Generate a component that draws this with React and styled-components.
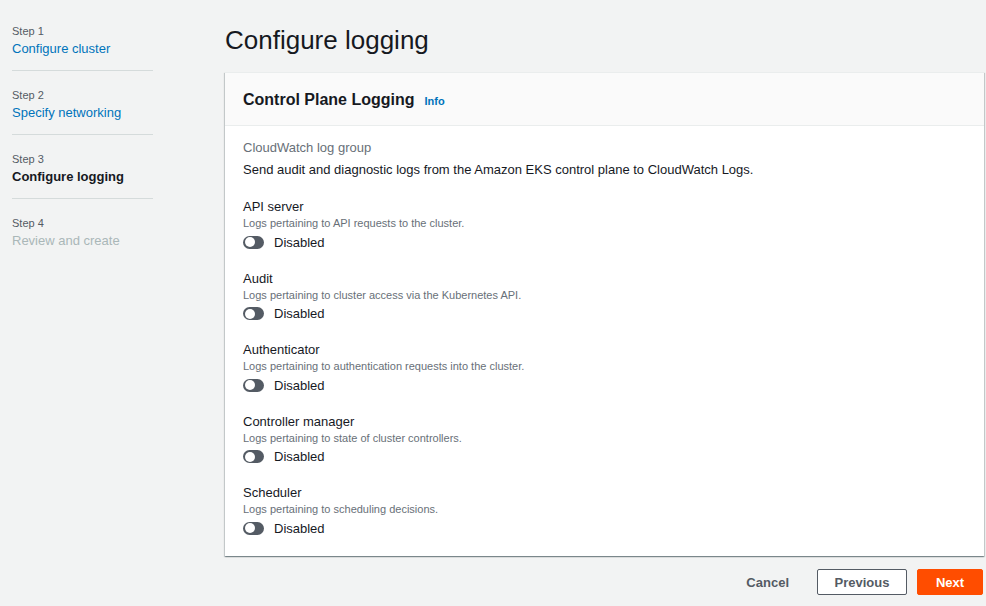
import React from "react";
import styled, { createGlobalStyle } from "styled-components";

const GlobalStyle = createGlobalStyle`
  html, body {
    margin: 0;
    padding: 0;
    background: #f2f3f3;
    font-family: "Liberation Sans", Arial, sans-serif;
    color: #16191f;
  }
`;

const steps = [
  { num: 1, title: "Configure cluster", state: "done" },
  { num: 2, title: "Specify networking", state: "done" },
  { num: 3, title: "Configure logging", state: "current" },
  { num: 4, title: "Review and create", state: "todo" },
];

const logTypes = [
  { name: "API server", desc: "Logs pertaining to API requests to the cluster." },
  { name: "Audit", desc: "Logs pertaining to cluster access via the Kubernetes API." },
  { name: "Authenticator", desc: "Logs pertaining to authentication requests into the cluster." },
  { name: "Controller manager", desc: "Logs pertaining to state of cluster controllers." },
  { name: "Scheduler", desc: "Logs pertaining to scheduling decisions." },
];

export default function App() {
  return (
    <>
      <GlobalStyle />
      <Page>
        <Sidebar>
          {steps.map((s, i) => (
            <StepItem key={s.num} last={i === steps.length - 1}>
              <StepNum>Step {s.num}</StepNum>
              <StepTitle state={s.state}>{s.title}</StepTitle>
            </StepItem>
          ))}
        </Sidebar>

        <Main>
          <PageTitle>Configure logging</PageTitle>
          <Card>
            <CardHeader>
              <CardTitle>Control Plane Logging</CardTitle>
              <InfoLink>Info</InfoLink>
            </CardHeader>
            <CardBody>
              <GroupLabel>CloudWatch log group</GroupLabel>
              <Intro>
                Send audit and diagnostic logs from the Amazon EKS control plane to CloudWatch Logs.
              </Intro>
              <LogList>
                {logTypes.map((l) => (
                  <LogItem key={l.name}>
                    <LogName>{l.name}</LogName>
                    <LogDesc>{l.desc}</LogDesc>
                    <ToggleRow>
                      <Toggle />
                      <ToggleLabel>Disabled</ToggleLabel>
                    </ToggleRow>
                  </LogItem>
                ))}
              </LogList>
            </CardBody>
          </Card>
          <Footer>
            <LinkButton>Cancel</LinkButton>
            <NormalButton>Previous</NormalButton>
            <PrimaryButton>Next</PrimaryButton>
          </Footer>
        </Main>
      </Page>
    </>
  );
}

const Page = styled.div`
  display: grid;
  grid-template-columns: 141px 1fr;
  column-gap: 72px;
  padding: 0 2px 0 12px;
  min-height: 606px;
  box-sizing: border-box;
`;

const Sidebar = styled.nav`
  padding-top: 7px;
`;

const StepItem = styled.div`
  padding: 16px 0 11px;
  border-bottom: ${(p) => (p.last ? "none" : "1px solid #d5dbdb")};
`;

const StepNum = styled.div`
  font-size: 11px;
  line-height: 16px;
  color: #545b64;
`;

const StepTitle = styled.div`
  font-size: 13px;
  line-height: 20px;
  font-weight: ${(p) => (p.state === "current" ? 700 : 400)};
  color: ${(p) =>
    p.state === "current" ? "#16191f" : p.state === "todo" ? "#aab7b8" : "#0073bb"};
`;

const Main = styled.main`
  padding-top: 24px;
`;

const PageTitle = styled.h1`
  margin: 0 0 16px;
  font-size: 26px;
  line-height: 32px;
  font-weight: 400;
  color: #16191f;
`;

const Card = styled.section`
  background: #fff;
  border-top: 1px solid #eaeded;
  box-shadow: 0 1px 1px 0 rgba(0, 28, 36, 0.3), 1px 1px 1px 0 rgba(0, 28, 36, 0.15),
    -1px 1px 1px 0 rgba(0, 28, 36, 0.15);
`;

const CardHeader = styled.header`
  display: flex;
  align-items: baseline;
  gap: 10px;
  height: 53px;
  box-sizing: border-box;
  padding: 16px 18px 0;
  background: #fafafa;
  border-bottom: 1px solid #eaeded;
`;

const CardTitle = styled.h2`
  margin: 0;
  font-size: 16px;
  line-height: 21px;
  font-weight: 700;
`;

const InfoLink = styled.a`
  font-size: 11px;
  font-weight: 700;
  color: #0073bb;
`;

const CardBody = styled.div`
  padding: 13px 18px 18px;
`;

const GroupLabel = styled.div`
  font-size: 13px;
  line-height: 18px;
  color: #687078;
`;

const Intro = styled.p`
  margin: 3px 0 19px;
  font-size: 13px;
  line-height: 20px;
`;

const LogList = styled.div`
  display: flex;
  flex-direction: column;
  gap: 18.5px;
`;

const LogItem = styled.div`
  display: flex;
  flex-direction: column;
`;

const LogName = styled.div`
  font-size: 13px;
  line-height: 16px;
`;

const LogDesc = styled.div`
  font-size: 11px;
  line-height: 16px;
  color: #687078;
`;

const ToggleRow = styled.div`
  display: flex;
  align-items: center;
  gap: 10px;
  height: 20px;
  margin-top: 1px;
`;

const Toggle = styled.span`
  position: relative;
  width: 21px;
  height: 13px;
  border-radius: 7px;
  background: #545b64;
  &::after {
    content: "";
    position: absolute;
    left: 1.5px;
    top: 1.5px;
    width: 10px;
    height: 10px;
    border-radius: 50%;
    background: #fff;
  }
`;

const ToggleLabel = styled.span`
  font-size: 13px;
  color: #16191f;
`;

const Footer = styled.footer`
  display: flex;
  justify-content: flex-end;
  align-items: center;
  gap: 10px;
  padding: 13px 1px 0 0;
`;

const ButtonBase = styled.button`
  font-family: inherit;
  font-size: 13px;
  font-weight: 700;
  height: 26px;
  border-radius: 2px;
  cursor: pointer;
`;

const LinkButton = styled(ButtonBase)`
  background: none;
  border: none;
  color: #545b64;
  padding: 0 18px;
`;

const NormalButton = styled(ButtonBase)`
  background: #fff;
  border: 1px solid #545b64;
  color: #545b64;
  width: 90px;
`;

const PrimaryButton = styled(ButtonBase)`
  background: #ff4d00;
  border: 1px solid #ff4d00;
  color: #fff;
  width: 66px;
`;
